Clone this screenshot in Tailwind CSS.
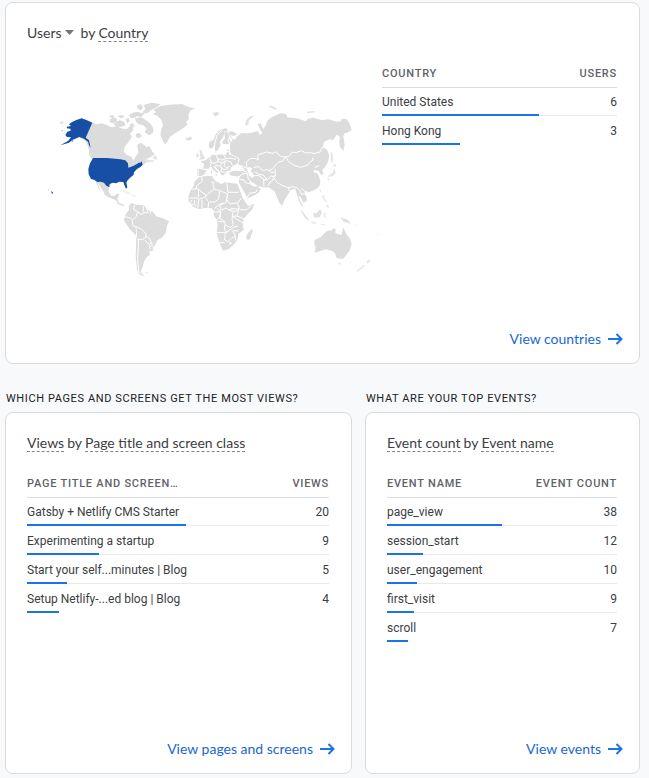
<!DOCTYPE html>
<html lang="en">
<head>
  <meta charset="UTF-8" />
  <meta name="viewport" content="width=device-width, initial-scale=1" />
  <title>Reports snapshot</title>
  <script src="https://cdn.jsdelivr.net/npm/@tailwindcss/browser@4"></script>
</head>
<body class="bg-[#f8f9fb] pt-[2px] pl-[5px] pr-[9px] pb-1 font-[Roboto,sans-serif] text-xs text-[#3c4043]">

  <!-- Users by country -->
  <section class="flex min-h-[362px] flex-col rounded-lg border border-[#dadce0] bg-white pt-5 pb-3">
    <h2 class="flex h-5 items-start px-[21px] pt-px font-[Lato,sans-serif] text-sm leading-[17px]">
      <button class="flex items-center gap-[3px] leading-[17px]">Users
        <svg class="h-[5px] w-[9px]" viewBox="0 0 9 5" fill="#757575"><path d="M0 0h9L4.5 5z"/></svg>
      </button>
      <span class="ml-[7px] flex items-start gap-[3px]"><span>by</span> <span class="border-b border-dashed border-[#80868b]">Country</span></span>
    </h2>
    <div class="mt-4 flex items-start pr-[22px] pl-[21px]">
      <svg class="min-w-0 flex-1" viewBox="0 -3 1065 690" fill="#dcdcdc" stroke-linejoin="round" role="img" aria-label="Users by country map">
        <!-- North America -->
        <g transform="translate(54 90)">
          <path d="M142 98l13 5 15-3 15 5 15 7 15-4 13 7 17 3 8-8 8-2 4 12-10 12 6 8-10 16-13 16-1 14 8 8 14 6 6 12 8-14 7-10-3-23 10-7 10 7 8 7 8-4 9 17 7 7-10 8-17 8 7 5-14 12-12-2-8 6-14 7-15 4-3-17-14-10-89-6-8-15v-12l-8-24-14-13z"/>
          <path d="M298 210l8-3 8 4 8-2 8 6-14 1-10 2zM322 203l10-9 5 14-8 1z" fill="#e6e6e6"/>
          <path d="M154 271l6 4h12l8 4 7 10 6 4-3 12 8 12 10 1 7-7 9 1-6 11-3 8-12-4-12-5-12-8-4-10-9-14-8-12zM152 273l5 3 5 16 5 10-5-4-6-14z"/>
          <path d="M194 90l10-9 13 6-3 8-11 5-9-4zM205 101l12-7 8-3 13 5 3 10-12 5-14-1zM190 79l11-4 8 4-7 4zM217 78l15-3 7 5-11 5zM242 87l9-3 3 10-8 5zM255 103l8-4 6 8-7 8-8-3zM252 75l15-8 14 4-11 12-13 1z"/>
          <path d="M270 85l20-3 13 9 15 12 8 15-2 10-11 8-14-9 6-11-10-10-14-3-8-8zM272 132l10-4 9 10-9 7-9-4z"/>
          <path d="M295 45l25-7 27 4-12 10-15 7-11 9-19 3 11-15zM276 46l12-3 6 9-6 9-10-5zM270 65l13 2 14 6-9 8-17-3z"/>
          <path d="M43 96l12-4 1 8-9 5zM49 107l7 2-3 3z" fill="#e6e6e6"/>
          <path d="M222 304l17-4 15 7 5 7-13-3-13-6zM258 316l11-2 8 4-9 3z" fill="#f0f0f0"/>
          <g fill="#174ea6">
            <path d="M144 204h42l40 4 15 3 8 9 1 13 14-5 12-6 5-4h5l4-4 3 11-8 7-9 5-9 10-1 7-9 8-9 9-4 7 3 14-4 4-5-11-3-9-13-1-8 5-10-2-10 4-1 10-9-5-7-9-10-3-10 1-10-7-9-2-7-14-1-16 5-17z"/>
            <path d="M80 97l14-7 16-5 16 6 16 7-20 45 10 8 5 23-5-8-3-11-11-8-15-6-12 5-9 4-10 8-26 8 24-14 8-10-12-1-5-6 6-10 10-3-1-6-11-1 1-5 12-2-6-5z"/>
            <path d="M49 121l5 1-2 2zM79 152l5-1-2 5zM9 299h4l-1 2zM18 304l5 2 1 5-4-1z"/>
          </g>
        </g>
        <!-- Greenland and Iceland -->
        <g transform="translate(249 90)">
          <path d="M130 60l20-12 30-4 36-2 22 10 18 3-16 7-5 13 2 13-9 7 4 10-17 13-20 12-15 10-8 15-7 9-7-14-7-15 3-17 5-13-5-15-11-12-14-6 9-6zM226 143l7 1 10-5 3 8-10 5-9-4z"/>
        </g>
        <!-- South and Central America -->
        <g transform="translate(219 390)">
          <path d="M86 47l9-8 15 5 22 2 8 12 18 7 11 14 20 6 18 9-6 14-4 22-12 13-13 8-7 14-7 10 2 7-12 2 2 11-10 6-8 14-4 16-6 12 10 15-12-3-9-15-4-41 2-62-20-20-15-22-2-8 5-14 10-12zM38 22l14 4 5 12 10 4 8 7-7-1-13-6-8-12z"/>
          <path d="M134 247l9-2 4 3-8 3z" fill="#f0f0f0"/>
          <path d="M104 44l-4 15 13 6-5 15-12 12 3 16 9 2 2 30M76 80l14 4 8 6M113 65l10 8 12-6 6 2M130 47v18M141 58l3 12M150 63l3 8M109 110l16 8 12 12 1 11-11 8-16-2M137 138l12 8 5 12-7 6-12-14M155 157l2 9-9 6M147 166l3 13M116 146l-3 60 3 38 9 7M158 168l4 8" fill="none" stroke="#fff" stroke-width="3"/>
        </g>
        <!-- Europe and Asia -->
        <g transform="translate(459 90)">
          <path d="M145 125L158 124 172 133 160 138 151 134 155 144 165 149 171 139 185 129 200 130 215 128 232 123 240 134 248 130 240 118 233 102 242 100 250 118 258 105 262 92 275 82 300 70 318 72 322 82 350 85 360 88 376 94 384 86 400 83 425 90 445 88 470 95 482 94 486 86 500 87 508 100 515 120 502 128 494 130 490 138 494 165 490 182 480 172 478 155 480 140 470 134 460 150 448 148 432 156 428 172 442 180 448 198 444 215 435 232 427 240 430 252 424 256 416 244 404 240 400 246 412 250 418 262 421 275 418 288 408 298 396 303 388 306 378 304 372 310 380 322 380 334 370 338 362 322 356 318 362 335 370 350 362 346 356 330 350 312 346 296 334 300 322 316 312 334 306 347 298 338 290 320 284 304 274 298 266 292 252 292 234 289 222 280 212 274 208 276 214 286 224 290 232 288 242 298 236 308 220 318 202 325 196 312 186 294 176 276 178 264 182 257 165 259 150 256 148 247 163 242 180 244 194 242 190 234 182 228 176 222 162 226 154 232 150 242 140 243 136 250 130 256 124 256 120 246 112 236 104 228 100 228 108 240 116 246 112 250 100 240 94 230 88 232 88 236 70 236 72 222 62 214 78 210 90 198 98 194 110 195 128 193 138 195 140 186 143 178 152 180 148 170 150 160 158 150 150 140z"/>
          <path d="M52 238L70 236 80 241 74 252 62 259 51 256z"/>
          <path d="M86 168l2-13 12-5 8-19 12-11 18-6 7 8-12 3-3 15-10 15 2 11-10 16-6 1-4-18-4 8-8 3zM133 130l4-7 8 6 3 17 5 9-8 8-15-1-4-7 9-10z"/>
          <path d="M58 181h8l1 10 8 12-3 5-15 1 5-7-3-6 1-6zM48 193l8-3v10l-7 3zM97 69l14-4 8 6-13 9zM195 106l3-14 10-12 15-4-9 9-8 8-1 13zM268 46l15 5 10 8-12-1-13-7zM380 65l20-2 5 4-22 3zM105 184l5 1-2 5zM93 239l4 1v10l-4 1zM103 253l10-1-3 6zM168 261l6-2-3 5z" fill="#e1e1e1"/>
          <!-- Caspian Sea -->
          <path d="M200 234l9-3 8 5-5 7 8 8 1 10-7 2-7-7-3-11z" fill="#fff"/>
          <path d="M144 145l5 20-2 12 4 16 12 5 14 8-2 12-8 8M181 226l10 4 11 5M201 232l-2-14 10-12 16-1 10 4-2-14 26-9 20 4 8-5 15 14 14 2 11-2 10-13 10 2 17-6 14 7 16-1 8 3 18-5 6-13 16-5 16 15 13 4-4 17-9 8-2 5M318 200l7 14 17 12 20 6 22-7 5-8 11-7-3-7M318 200l-10 13-14 4-10 12-8 9-12 4M220 232l16-2 12 11 15-2 12 9 8-2M224 245l12 8 14 2 10 12-8 6M219 258l15-2 16 10 2 22M250 270l14-2 8-10 14 2M264 288l6-12 8-4 4-16M282 264l10 14 16 9 18 6 14-3 12 4M326 292l1 9 12 4M352 294l8 8 5 12 8-3M285 236l1 22M364 295l10 8 7 13M404 232l14-5M192 243l10 4M180 257l9-6 14-1M202 252l2 12 8 12M178 268l14 2 4 8 20 5M200 324l10-15 17-2 5-7" fill="none" stroke="#fff" stroke-width="3"/>
          <path d="M103 175l2-19 7-22 15-14M91 197l-2 10 6 9-5 14M107 194l6 12 1 8-12 6-14-4M112 206l14 4 12-4M113 215l15 3 9-6 15 3M127 219l-8 10-14-4M136 213l-4 14 8 6 10-4M120 229l12 10 13-3M136 183l14 3-1 8M129 192l9 14 12-2 18 4M65 237l20 3M55 239l-1 16M152 215l6 12M125 230l-2 15 12 2" fill="none" stroke="#fff" stroke-width="3"/>
          <!-- Sakhalin, Japan, Taiwan -->
          <path d="M452 186l5 3 3 18-3 13-4-6zM461 221l9 4-5 6-5-3zM463 234l4 15-8 9-16 3 3-5 12-8zM443 263l5 3-2 6-4-4zM419 301l4-3-1 10z" fill="#e6e6e6"/>
        </g>
        <!-- Africa -->
        <g transform="translate(459 360)">
          <path d="M44 4l14-12 14-3 24-2 5 9 5 8 18 8 12-5 36 4 7 18 7 20 10 18 9 11 17-6-4 14-12 14-14 15-4 15 3 20-16 12-3 18-12 15-15 13-16 4-9-20-10-32 3-25-3-15-9-15 1-13-7-7-20-1-20 4-14-7-15-16-1-16 6-16 10-16z"/>
          <path d="M200 164l15-18 3 7-8 24-7 3-4-6z"/>
          <path d="M64-9l3 13-18 14v9H36M49 24l26 19 3 7-20 8-8-4H28M56 26l-1 28M78 46l25-19-6-20M94 5l10 4M103 27l16 5 25 10-7 27-16 2M119 34l-3 22-10 10H86l-2 18M140 7l4 30h32M142 44l-2 14 10 14 24-4 10-14M172 70l6 14-9 10-18-2-12-8-15 6-6-14 14-6M119 71l-16 15M112 85l10 12-4 16-10 8M102 96h18M122 92l-2 25 14 7 2 12 16 6 8-8-4-16 3-23M148 93l5-7 24 1M177 84l-6 24 20 8M179 89l19 1 16-12M156 109l16-1M160 111l22 14 8 4M112 124l20 2M134 136v14l8 10M110 157l26 1 14-8 10-8 14-4M136 158l-2 22 10 5 10-10 12-8-8-14M158 152l18 1M166 167v14M120 188h14M43 60l3 20M56 60l-3 26M66 60v25M79 55l4 8M34 60l-4 14 11-1" fill="none" stroke="#fff" stroke-width="3"/>
          <path d="M146 188l6-3 4 5-6 4z" fill="#fff"/>
        </g>
        <!-- Oceania -->
        <g transform="translate(759 390)">
          <path d="M103 151l21-11 11-12 10-7 9 1 4-6 9 1-1 12 18 7 6-24 9 20 11 14 5 16-6 19-11 15-8 10-20-1-5-15-7-6-20-6-20 6-14 4 3-14-4-14z"/>
          <path d="M174 219l9-1-3 7zM179 81l11 4 14 4 9 14-13-6h-9l-4-8zM59 57l12 11 14 20 3 5-11-7-12-19zM99 69l10 1 11-12 6 10-8 14-14 1z" fill="#e1e1e1"/>
          <path d="M88 94l14 2 11 4-13 1zM117 101l12 1 12 2-11 2zM130 72l4-3 7-1-6 5 2 9-4 1zM125 14l7 3 1 8 8 9-6 1-8-13zM137 44l10 2-1 8-6-3zM217 98l7 5 8 5-5-1zM3 47l3 2-2 5zM253 143l9 5-4-1zM293 133l6-2 1 2-6 2zM266 207l6 5-10 9-2-6zM230 241l12-8 10-9 5 1-13 12-12 8z" fill="#e8e8e8"/>
        </g>
      </svg>
      <table class="w-[235px] border-separate border-spacing-0">
        <thead>
          <tr class="h-7 text-[11px] tracking-[0.07em] text-[#5f6368] shadow-[0_1px_0_#dadce0]">
            <th class="p-0 pt-[2px] text-left font-medium">COUNTRY</th>
            <th class="p-0 pt-[2px] text-right font-medium">USERS</th>
          </tr>
        </thead>
        <tbody>
          <tr class="relative h-[29px] shadow-[inset_0_-1px_0_#e8eaed]">
            <td class="p-0">United States<div class="absolute bottom-0 left-0 h-[2px] bg-[#1a73e8]" style="width: 66.7%"></div></td>
            <td class="p-0 text-right">6</td>
          </tr>
          <tr class="relative h-[29px]">
            <td class="p-0">Hong Kong<div class="absolute bottom-0 left-0 h-[2px] bg-[#1a73e8]" style="width: 33.3%"></div></td>
            <td class="p-0 text-right">3</td>
          </tr>
        </tbody>
      </table>
    </div>
    <a href="#" class="mt-auto mr-4 flex h-6 items-center gap-[7px] self-end font-[Lato,sans-serif] text-sm text-[#1967d2]">View countries
      <svg class="h-3 w-[15px]" viewBox="0 0 15 12" fill="none" stroke="#1a73e8" stroke-width="2"><path d="M0 6h13.5M8.5 1l5 5-5 5"/></svg>
    </a>
  </section>

  <div class="mt-[27px] grid grid-cols-[347fr_275fr] gap-[13px]">
    <!-- Views by page -->
    <div>
      <h3 class="mb-[5px] pl-px text-[11px] leading-4 tracking-[0.055em] whitespace-nowrap text-[#202124]">WHICH PAGES AND SCREENS GET THE MOST VIEWS?</h3>
      <section class="flex min-h-[362px] flex-col rounded-lg border border-[#dadce0] bg-white pt-5 pb-3">
        <h2 class="flex h-5 items-start gap-[3px] px-[21px] pt-px font-[Lato,sans-serif] text-sm leading-[17px]">
          <span class="border-b border-dashed border-[#80868b]">Views</span>
          <span>by</span>
          <span class="border-b border-dashed border-[#80868b]">Page title and screen class</span>
        </h2>
        <div class="mt-4 pr-[22px] pl-[21px]">
          <table class="w-full border-separate border-spacing-0">
            <thead>
              <tr class="h-7 text-[11px] tracking-[0.07em] text-[#5f6368] shadow-[0_1px_0_#dadce0]">
                <th class="p-0 pt-[2px] text-left font-medium">PAGE TITLE AND SCREEN…</th>
                <th class="p-0 pt-[2px] text-right font-medium">VIEWS</th>
              </tr>
            </thead>
            <tbody>
              <tr class="relative h-[29px] shadow-[inset_0_-1px_0_#e8eaed]">
                <td class="p-0">Gatsby + Netlify CMS Starter<div class="absolute bottom-0 left-0 h-[2px] bg-[#1a73e8]" style="width: 52.6%"></div></td>
                <td class="p-0 text-right">20</td>
              </tr>
              <tr class="relative h-[29px] shadow-[inset_0_-1px_0_#e8eaed]">
                <td class="p-0">Experimenting a startup<div class="absolute bottom-0 left-0 h-[2px] bg-[#1a73e8]" style="width: 23.7%"></div></td>
                <td class="p-0 text-right">9</td>
              </tr>
              <tr class="relative h-[29px] shadow-[inset_0_-1px_0_#e8eaed]">
                <td class="p-0">Start your self...minutes | Blog<div class="absolute bottom-0 left-0 h-[2px] bg-[#1a73e8]" style="width: 13.2%"></div></td>
                <td class="p-0 text-right">5</td>
              </tr>
              <tr class="relative h-[29px]">
                <td class="p-0">Setup Netlify-...ed blog | Blog<div class="absolute bottom-0 left-0 h-[2px] bg-[#1a73e8]" style="width: 10.5%"></div></td>
                <td class="p-0 text-right">4</td>
              </tr>
            </tbody>
          </table>
        </div>
        <a href="#" class="mt-auto mr-4 flex h-6 items-center gap-[7px] self-end font-[Lato,sans-serif] text-sm text-[#1967d2]">View pages and screens
          <svg class="h-3 w-[15px]" viewBox="0 0 15 12" fill="none" stroke="#1a73e8" stroke-width="2"><path d="M0 6h13.5M8.5 1l5 5-5 5"/></svg>
        </a>
      </section>
    </div>

    <!-- Event count by event name -->
    <div>
      <h3 class="mb-[5px] pl-px text-[11px] leading-4 tracking-[0.055em] whitespace-nowrap text-[#202124]">WHAT ARE YOUR TOP EVENTS?</h3>
      <section class="flex min-h-[362px] flex-col rounded-lg border border-[#dadce0] bg-white pt-5 pb-3">
        <h2 class="flex h-5 items-start gap-[3px] px-[21px] pt-px font-[Lato,sans-serif] text-sm leading-[17px]">
          <span class="border-b border-dashed border-[#80868b]">Event count</span>
          <span>by</span>
          <span class="border-b border-dashed border-[#80868b]">Event name</span>
        </h2>
        <div class="mt-4 pr-[22px] pl-[21px]">
          <table class="w-full border-separate border-spacing-0">
            <thead>
              <tr class="h-7 text-[11px] tracking-[0.07em] text-[#5f6368] shadow-[0_1px_0_#dadce0]">
                <th class="p-0 pt-[2px] text-left font-medium">EVENT NAME</th>
                <th class="p-0 pt-[2px] text-right font-medium">EVENT COUNT</th>
              </tr>
            </thead>
            <tbody>
              <tr class="relative h-[29px] shadow-[inset_0_-1px_0_#e8eaed]">
                <td class="p-0">page_view<div class="absolute bottom-0 left-0 h-[2px] bg-[#1a73e8]" style="width: 50%"></div></td>
                <td class="p-0 text-right">38</td>
              </tr>
              <tr class="relative h-[29px] shadow-[inset_0_-1px_0_#e8eaed]">
                <td class="p-0">session_start<div class="absolute bottom-0 left-0 h-[2px] bg-[#1a73e8]" style="width: 15.8%"></div></td>
                <td class="p-0 text-right">12</td>
              </tr>
              <tr class="relative h-[29px] shadow-[inset_0_-1px_0_#e8eaed]">
                <td class="p-0">user_engagement<div class="absolute bottom-0 left-0 h-[2px] bg-[#1a73e8]" style="width: 13.2%"></div></td>
                <td class="p-0 text-right">10</td>
              </tr>
              <tr class="relative h-[29px] shadow-[inset_0_-1px_0_#e8eaed]">
                <td class="p-0">first_visit<div class="absolute bottom-0 left-0 h-[2px] bg-[#1a73e8]" style="width: 11.8%"></div></td>
                <td class="p-0 text-right">9</td>
              </tr>
              <tr class="relative h-[29px]">
                <td class="p-0">scroll<div class="absolute bottom-0 left-0 h-[2px] bg-[#1a73e8]" style="width: 9.2%"></div></td>
                <td class="p-0 text-right">7</td>
              </tr>
            </tbody>
          </table>
        </div>
        <a href="#" class="mt-auto mr-4 flex h-6 items-center gap-[7px] self-end font-[Lato,sans-serif] text-sm text-[#1967d2]">View events
          <svg class="h-3 w-[15px]" viewBox="0 0 15 12" fill="none" stroke="#1a73e8" stroke-width="2"><path d="M0 6h13.5M8.5 1l5 5-5 5"/></svg>
        </a>
      </section>
    </div>
  </div>
</body>
</html>
